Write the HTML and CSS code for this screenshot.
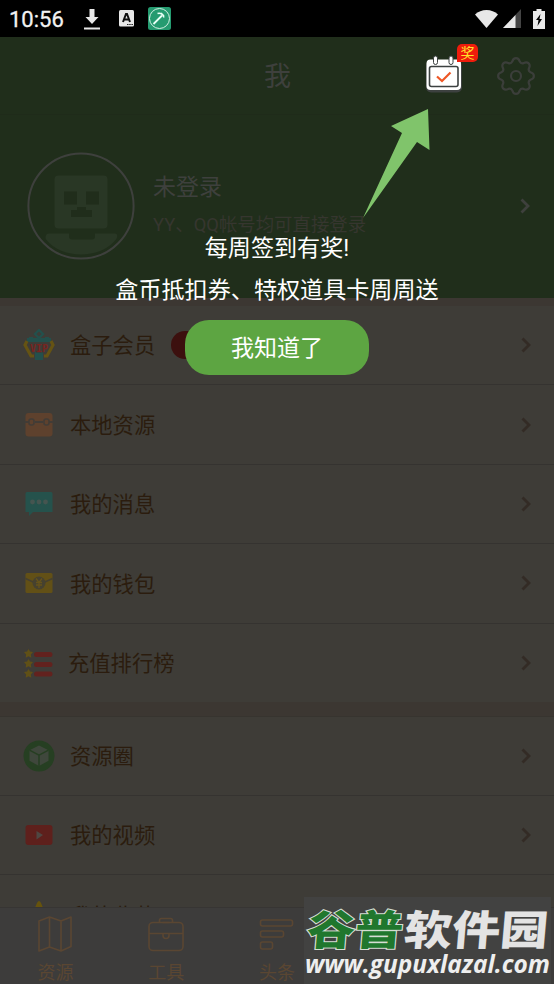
FILE: index.html
```html
<!DOCTYPE html>
<html lang="zh-CN">
<head>
<meta charset="utf-8">
<title>我</title>
<link rel="stylesheet" href="styles.css">
</head>
<body>
<svg class="defs" width="0" height="0"><symbol id="chev" viewBox="0 0 10 16"><path d="M1.500 1.500 8 8l-6.500 6.500" fill="none" stroke="currentColor" stroke-width="2.800"/></symbol></svg>
<div class="phone">
  <div class="status">
    <span class="time">10:56</span>
    <svg class="s-download" width="16" height="21" viewBox="0 0 16 21"><path d="M5.500 0h5v8h4L8 15 1.500 8h4zM0 18.500h16v2H0z" fill="#e8e8e8"/></svg>
    <svg class="s-a" width="15" height="17" viewBox="0 0 15 17"><rect width="15" height="16.500" rx="1.500" fill="#e8e8e8"/><path d="M4 12 7 4h1l3 8M5 9.500h5" fill="none" stroke="#111" stroke-width="2"/><path d="M8 14.500h6" stroke="#222" stroke-width="1.200" stroke-dasharray="1.500 .7"/></svg>
    <svg class="s-app" width="23" height="23" viewBox="0 0 23 23"><rect width="23" height="23" rx="2.500" fill="#259b70"/><circle cx="11.500" cy="11.500" r="10" fill="none" stroke="#d4f0e4" stroke-width="1"/><path d="M5.500 17 14 8.500" stroke="#e8fff6" stroke-width="1.800"/><path d="M9.500 6.500c3-1 5.500.5 6.500 4M13 6l3 3" fill="none" stroke="#e8fff6" stroke-width="1.500"/></svg>
    <span class="grow"></span>
    <svg width="25" height="20" viewBox="0 0 25 20"><path d="M1 5.500C7-.5 18-.5 24 5.500L12.500 19z" fill="#e8e8e8"/></svg>
    <svg class="s-signal" width="18" height="19" viewBox="0 0 18 19"><path d="M18 0v19H0z" fill="#444"/><path d="M12.500 6v13H0z" fill="#e8e8e8"/></svg>
    <svg class="s-battery" width="12" height="20" viewBox="0 0 12 20"><path d="M3.500 0h5v2H12v18H0V2h3.500z" fill="#e8e8e8"/><path d="M7.500 5 3 11h2.500L4.500 17 9 10H6.500z" fill="#000"/></svg>
  </div>

  <header class="titlebar">
    <h1>我</h1>
    <div class="calendar">
      <svg width="38" height="38" viewBox="0 0 38 38"><rect x="1" y="6" width="36" height="31.500" rx="5" fill="#3d4140"/><rect x="1.500" y="4.500" width="34.500" height="30.500" rx="4" fill="#fff"/><rect x="4.500" y="11.500" width="28.500" height="20" rx="2" fill="#fff" stroke="#3c4141" stroke-width="1.600"/><rect x="8.500" y="1" width="4" height="8.500" rx="2" fill="#fff" stroke="#3c4141"/><rect x="24" y="1" width="4" height="8.500" rx="2" fill="#fff" stroke="#3c4141"/><path d="m12 21.500 5 4.500 8.500-8.500" fill="none" stroke="#ef5725" stroke-width="2.200"/></svg>
      <span class="prize">奖</span>
    </div>
    <svg class="gear" width="38" height="38" viewBox="0 0 38 38" fill="none" stroke="#3b3e3a" stroke-width="2.200"><circle cx="19" cy="19" r="5"/><path d="M15.300 4.500C16.500 0 21.500 0 22.700 4.500Q24 7 26.600 6.100C30.700 3.800 34.200 7.300 31.900 11.400Q31 14 33.500 15.300C38 16.500 38 21.500 33.500 22.700Q31 24 31.900 26.600C34.200 30.700 30.700 34.200 26.600 31.900Q24 31 22.700 33.500C21.500 38 16.500 38 15.300 33.500Q14 31 11.400 31.900C7.300 34.200 3.800 30.700 6.100 26.600Q7 24 4.500 22.700C0 21.500 0 16.500 4.500 15.300Q7 14 6.100 11.400C3.800 7.300 7.300 3.800 11.400 6.100Q14 7 15.300 4.500z"/></svg>
  </header>

  <section class="profile">
    <svg width="108" height="108" viewBox="0 0 108 108"><circle cx="54" cy="54" r="52.600" fill="none" stroke="#3e403d" stroke-width="2"/><rect x="27.500" y="23.500" width="53" height="53" rx="4" fill="#293725"/><path d="M37 39.500h13v13H37zM59 39.500h13v13H59zM50 55h9v3h6v7H44v-7h6z" fill="#202d1b"/><path d="M22 81.500h20v3q0 3 3 3h20q3 0 3-3v-3h20c3 0 3 4 0 7C73 107 35 107 20 88.500c-3-3-1-7 2-7z" fill="#293725"/></svg>
    <div class="who"><p class="name">未登录</p><p class="hint">YY、QQ帐号均可直接登录</p></div>
    <svg class="chev" width="10" height="16"><use href="#chev"/></svg>
  </section>

  <main class="list">
    <div class="gap first"></div>
    <div class="row"><svg width="32" height="32" viewBox="0 0 32 32"><path d="M6 8h4v1h12V8h4v1h2v4H4V9h2zM12 23h8v8h-8z" fill="#23504c"/><path d="m16 1 4 4-4 4-4-4z" fill="#3e3c37" stroke="#23504c" stroke-width="2.300"/><path d="m4 12-2 4 6 11h3M28 12l2 4-6 11h-3" fill="none" stroke="#655313" stroke-width="3.200"/><text class="vip" x="7" y="22.500" textLength="18" lengthAdjust="spacingAndGlyphs">VIP</text></svg><span>盒子会员</span><i class="dot"></i><svg class="chev" width="10" height="16"><use href="#chev"/></svg></div>
    <div class="row"><svg width="32" height="32" viewBox="0 0 32 32"><rect x="2.500" y="4" width="27" height="23.500" rx="3" fill="#5e412d"/><path d="M2 13h4m6 0h8m6 0h4" stroke="#423c36" stroke-width="1.800"/><rect x="6" y="10" width="5" height="6" rx="2" fill="#5e412d" stroke="#423c36" stroke-width="1.600"/><rect x="21" y="10" width="5" height="6" rx="2" fill="#5e412d" stroke="#423c36" stroke-width="1.600"/></svg><span>本地资源</span><svg class="chev" width="10" height="16"><use href="#chev"/></svg></div>
    <div class="row"><svg width="32" height="32" viewBox="0 0 32 32"><path d="M4 4h24q1.500 0 1.500 1.500V24H10l-4 4v-4H2.500V5.500Q2.500 4 4 4z" fill="#25524c"/><circle cx="9.500" cy="14" r="2.400" fill="#455550"/><circle cx="16" cy="14" r="2.400" fill="#455550"/><circle cx="22.500" cy="14" r="2.400" fill="#455550"/></svg><span>我的消息</span><svg class="chev" width="10" height="16"><use href="#chev"/></svg></div>
    <div class="row"><svg width="32" height="32" viewBox="0 0 32 32"><rect x="2.500" y="6" width="27" height="20" rx="1.500" fill="#625016"/><path d="M2.500 11.500 10 15h12l7.500-3.500" fill="none" stroke="#46402f" stroke-width="1.500"/><circle cx="16" cy="16" r="6.500" fill="#46412f"/><path d="m13 11.500 3 4 3-4M16 15v6M13 15.500h6M13 18h6" fill="none" stroke="#66531a" stroke-width="1.300"/></svg><span>我的钱包</span><svg class="chev" width="10" height="16"><use href="#chev"/></svg></div>
    <div class="row rank"><svg width="32" height="32" viewBox="0 0 32 32"><path d="M13.500 7.500h13.500M13.500 17.500h13.500M13.500 27h13.500" stroke="#62221e" stroke-width="5" stroke-linecap="round"/><path id="st" d="m5.500 2 1.500 2.500 3 .6-2.100 2.300.4 3.300-2.800-1.400-2.800 1.400.4-3.300L1 5.100l3-.6z" fill="#605016"/><use href="#st" y="10"/><use href="#st" y="20"/></svg><span>充值排行榜</span><svg class="chev" width="10" height="16"><use href="#chev"/></svg></div>
    <div class="gap"></div>
    <div class="row"><svg width="32" height="32" viewBox="0 0 32 32"><circle cx="16" cy="16" r="15.500" fill="#263f22"/><path d="m16 5.500 9.500 4.700v10.600L16 26l-9.500-5.200V10.200z" fill="#3f473c"/><path d="m6.500 10.200 9.500 5 9.500-5M16 15.200V26" fill="none" stroke="#263f22" stroke-width="1.500"/></svg><span>资源圈</span><svg class="chev" width="10" height="16"><use href="#chev"/></svg></div>
    <div class="row"><svg width="32" height="32" viewBox="0 0 32 32"><rect x="2.500" y="6" width="27" height="20" rx="3" fill="#5e201c"/><path d="m13.500 12 6.500 4-6.500 4.500z" fill="#4f4742"/></svg><span>我的视频</span><svg class="chev" width="10" height="16"><use href="#chev"/></svg></div>
    <div class="row last"><svg width="32" height="32" viewBox="0 0 32 32"><path d="M14 4q2-4 4 0l3 7 8 1-6 6 2 9-9-5-9 5 2-9-6-6 8-1z" fill="#66530c"/></svg><span>我的收藏</span><svg class="chev" width="10" height="16"><use href="#chev"/></svg></div>
  </main>

  <nav class="tabs">
    <div class="tab"><svg width="36" height="36" viewBox="0 0 36 36"><path d="M2 5 12.500 1 24 5l10-4v29.500L24 35l-11.500-4L2 35zM12.500 1v30M24 5v30"/></svg><span>资源</span></div>
    <div class="tab"><svg width="36" height="36" viewBox="0 0 36 36"><rect x="1" y="6.500" width="34" height="28" rx="4"/><path d="M11.500 6V4.500q0-2 2-2h9q2 0 2 2V6M14.500 6.500h7M1 17.500h34M15 17.500v2q0 3 3 3t3-3v-2"/></svg><span>工具</span></div>
    <div class="tab"><svg width="36" height="36" viewBox="0 0 36 36"><rect x="1.500" y="4" width="32" height="6" rx="2"/><rect x="1.500" y="15" width="23" height="6" rx="2"/><rect x="1.500" y="26" width="12" height="7" rx="2"/></svg><span>头条</span></div>
    <div class="tab"></div>
    <div class="tab"></div>
  </nav>

  <div class="guide">
    <svg class="arrow" width="70" height="112" viewBox="0 0 70 112"><path d="m1 110 39-85-11-7L66 1l1.500 41L55 34z" fill="#80c46b"/></svg>
    <p class="line one">每周签到有奖!</p>
    <p class="line">盒币抵扣券、特权道具卡周周送</p>
    <button class="ok">我知道了</button>
  </div>

  <svg class="mark" width="250" height="87" viewBox="0 0 250 87">
    <rect width="247" height="87" fill="#424241"/>
    <g transform="translate(-1 48) skewX(-5) scale(1 .86)" class="mark-name"><text class="mark-green" x="3" y="0" textLength="96" lengthAdjust="spacingAndGlyphs">谷普</text><text x="100" y="0" textLength="144" lengthAdjust="spacingAndGlyphs">软件园</text></g>
    <text class="mark-url" x="1" y="75.500" textLength="245" lengthAdjust="spacingAndGlyphs">www.gupuxlazal.com</text>
  </svg>
</div>
</body>
</html>
```
FILE: styles.css
```css
* { box-sizing: border-box; margin: 0; padding: 0; }
body { background: #3e3c37; font-family: Roboto, "Noto Sans CJK SC", sans-serif; }
svg { display: block; flex: none; }
.defs { position: absolute; }
.phone { position: relative; width: 554px; height: 984px; overflow: hidden; display: flex; flex-direction: column; }
.status { height: 37px; flex: none; background: #000; display: flex; align-items: center; padding: 0 10px 0 9px; }
.time { width: 75px; color: #f2f2f2; font-size: 22px; font-weight: 400; line-height: 37px; padding-top: 1px; -webkit-text-stroke: 0.3px #f2f2f2; }
.s-download { margin-top: 1px; }
.s-a { margin-left: 19px; }
.s-app { margin: 0 0 0 14px; }
.grow { flex: 1; }
.s-signal { margin-left: 4px; }
.s-battery { margin: 0 -1px 0 12px; }
.titlebar { height: 78px; flex: none; background: #202e1b; border-bottom: 1px solid #1f2b1a; display: grid; grid-template-columns: 264px 161px 72px 1fr; align-items: center; }
.titlebar h1 { grid-column: 2; color: #3e403d; font-size: 27px; font-weight: 400; line-height: 40px; padding-top: 3px; }
.calendar { position: relative; width: 38px; margin-top: -4px; }
.prize { position: absolute; left: 32px; top: -11px; width: 21px; height: 18px; border-radius: 5px 5px 5px 0; background: #ef1c0c; color: #ffe42a; font-size: 14px; line-height: 19px; text-align: center; }
.profile { height: 183px; flex: none; background: #202e1b; display: flex; align-items: center; padding: 0 24px 2px 27px; }
.who { flex: 1; padding: 0 0 2px 18px; }
.name { color: #3e403d; font-size: 23px; line-height: 34px; }
.hint { color: #36362f; font-size: 18.4px; line-height: 28px; margin-top: 6px; white-space: nowrap; }
.chev { margin-left: auto; color: #332b25; }
.profile .chev { color: #3e403d; }
.list { flex: 1; min-height: 0; overflow: hidden; }
.gap { height: 15px; background: #3c3732; border-bottom: 1px solid #37342f; }
.gap.first { height: 8px; border: 0; }
.row { height: 79.4px; border-bottom: 1px solid #353330; display: flex; align-items: center; padding: 0 23px 0 22.5px; color: #2b1c0e; font-size: 21.3px; line-height: 32px; }
.row span { margin-left: 15.5px; padding-top: 2.5px; }
.vip { font: 700 10px "DejaVu Sans Mono", monospace; fill: #782420; stroke: #3e3c37; stroke-width: 1.5px; paint-order: stroke; }
.rank { height: 78px; border: 0; }
.rank span { margin-left: 13.5px; }
.dot { width: 50px; height: 28px; margin-left: 16px; border-radius: 14px; background: #3c100e; }
.last { border: 0; }
.last span { padding-top: 4px; }
.tabs { height: 77px; flex: none; background: #3d3c3b; border-top: 1px solid #373533; display: grid; grid-template-columns: repeat(5, 1fr); color: #5a4632; }
.tab { display: flex; flex-direction: column; align-items: center; padding-top: 8px; font-size: 18px; line-height: 26px; }
.tab svg { fill: none; stroke: #5a4632; stroke-width: 1.6; stroke-linejoin: round; }
.tab span { margin-top: 8px; }
.guide { position: absolute; left: 0; top: 108px; width: 554px; display: flex; flex-direction: column; align-items: center; color: #fff; }
.arrow { margin-left: 239px; }
.line { font-size: 23.1px; line-height: 42px; white-space: nowrap; }
.one { margin-top: 8px; }
.ok { width: 184px; height: 55px; margin-top: 8px; padding-top: 2px; border: 0; border-radius: 24px; background: #5da542; color: #fff; font: 23px/53px Roboto, "Noto Sans CJK SC", sans-serif; }
.mark { position: absolute; left: 304px; top: 897px; }
.mark-name { font: 900 48px "Noto Sans CJK SC", sans-serif; fill: #e3e3e3; }
.mark-green { fill: #20772d; stroke: #d5ddd3; stroke-width: 2.5px; paint-order: stroke; }
.mark-url { font: italic 700 25px "Open Sans", sans-serif; fill: #eee; }
```
